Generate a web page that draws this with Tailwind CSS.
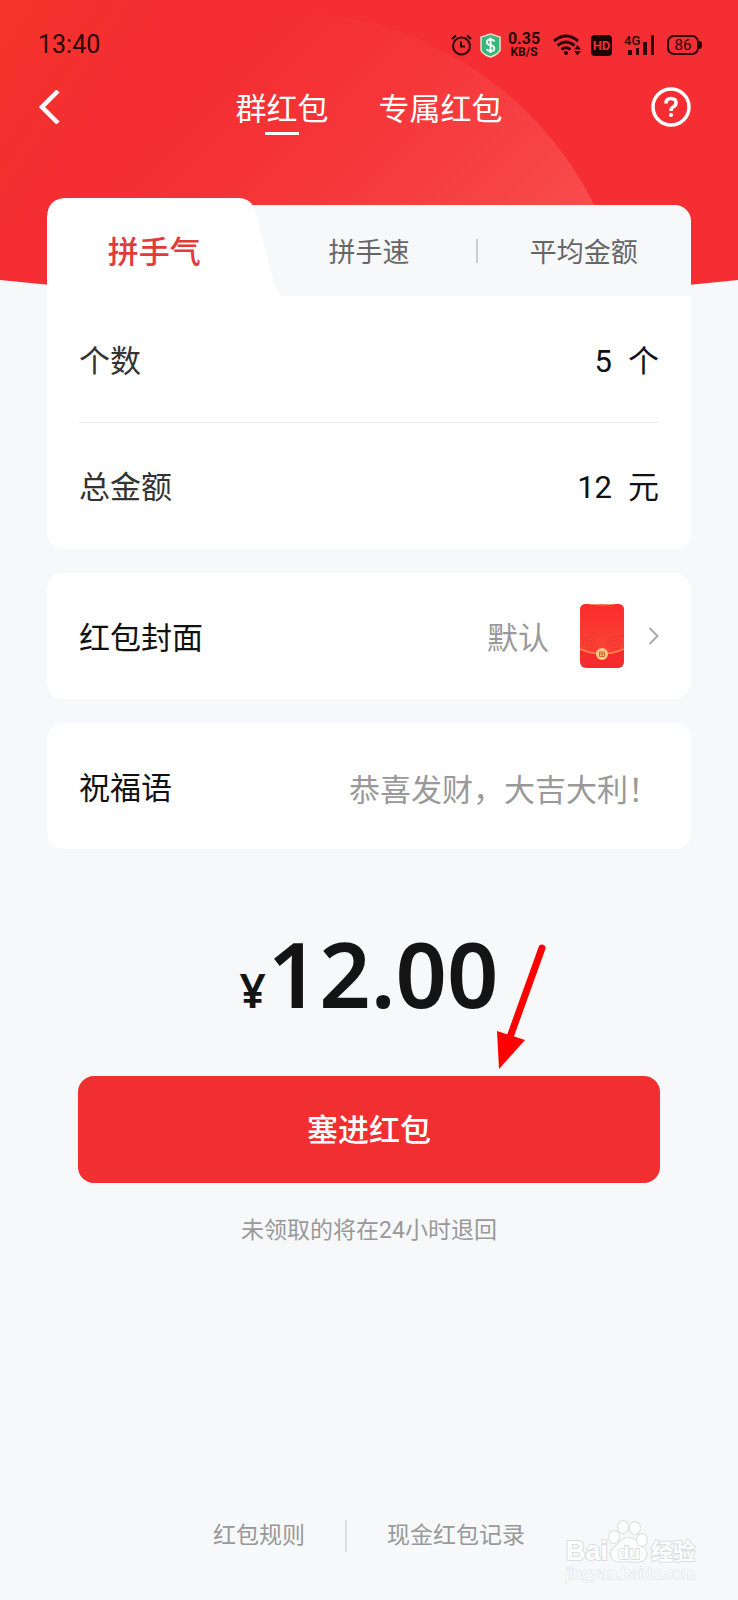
<!DOCTYPE html>
<html lang="zh-CN">
<head>
    <meta charset="UTF-8" />
    <meta name="viewport" content="width=device-width, initial-scale=1" />
    <title>群红包</title>
    <script src="https://cdn.jsdelivr.net/npm/@tailwindcss/browser@4"></script>
</head>
<body class="bg-[#f7f8fa] text-[#111] font-[Roboto,'Noto_Sans_CJK_SC',sans-serif]">
<div class="relative min-h-screen flex flex-col">
    <!-- Red backdrop -->
    <svg class="absolute inset-x-0 top-0 w-full h-[320px]" viewBox="0 0 738 320" preserveAspectRatio="none" aria-hidden="true">
        <defs>
            <linearGradient id="base" gradientUnits="userSpaceOnUse" x1="0" y1="0" x2="120" y2="80">
                <stop offset="0" stop-color="#f4342a" />
                <stop offset="1" stop-color="#f42e32" />
            </linearGradient>
            <linearGradient id="glow" gradientUnits="userSpaceOnUse" x1="250" y1="40" x2="500" y2="290">
                <stop offset="0" stop-color="#fb6363" stop-opacity="0" />
                <stop offset="0.4" stop-color="#fb6363" stop-opacity="0.15" />
                <stop offset="1" stop-color="#fb6363" stop-opacity="0.55" />
            </linearGradient>
            <clipPath id="arc"><path d="M0 0H738V280Q369 320 0 280Z" /></clipPath>
        </defs>
        <g clip-path="url(#arc)">
            <rect width="738" height="320" fill="url(#base)" />
            <circle cx="281" cy="361" r="350" fill="url(#glow)" />
        </g>
    </svg>

    <!-- Status bar -->
    <div class="relative h-[90px] pl-[38px] pr-9 flex items-center justify-between text-[#2a0606]">
        <span class="text-[25px] leading-8">13:40</span>
        <div class="flex items-center">
            <svg class="w-[21px] h-[22px] mr-2" viewBox="0 0 21 22" fill="none" stroke="currentColor" stroke-width="2">
                <circle cx="10.500" cy="12" r="8.500" />
                <path d="M10 7.500V12.500H14M1 5L5 1.500M20 5L16 1.500" />
            </svg>
            <svg class="w-[21px] h-[25px] mr-[6px]" viewBox="0 0 21 25">
                <path d="M10.500 1L20 4V17Q19 21 10.500 24Q2 21 1 17V4Z" fill="#36b878" stroke="#fbd9d0" stroke-width="1.500" />
                <path d="M14.500 8.500Q13.500 6.500 10.500 6.500Q6.800 6.500 6.800 9.300Q6.800 11.700 10.500 12.200Q14.300 12.800 14.300 15.400Q14.300 18 10.500 18Q7.500 18 6.500 16M10.500 4.500V20" fill="none" stroke="#fff" stroke-width="1.800" />
            </svg>
            <div class="w-[34px] mr-3 flex flex-col items-center font-bold">
                <span class="text-[16px] leading-[14px]">0.35</span>
                <span class="text-[12px] leading-[12px]">KB/S</span>
            </div>
            <svg class="w-[28px] h-[22px] mr-[10px]" viewBox="0 0 28 22" fill="none" stroke="currentColor" stroke-width="3">
                <path d="M1 7Q13 -3 25 7M4.500 11.500Q13 4.500 21.500 11.500M8.500 15.500Q13 12 17.500 15.500" />
                <circle cx="13" cy="19" r="2" fill="currentColor" stroke="none" />
                <path d="M21 15.500L24.500 11L28 15.500ZM21 17L24.500 21.500L28 17Z" fill="currentColor" stroke="none" />
            </svg>
            <span class="w-[21px] h-[21px] mr-3 rounded bg-[#1c0404] text-[#f42e32] text-[13px] leading-[21px] text-center font-bold">HD</span>
            <svg class="w-[31px] h-[22px] mr-3" viewBox="0 0 31 22" fill="currentColor">
                <text x="0" y="11" font-size="13" font-weight="500">4G</text>
                <path d="M4 16h4v5h-4zM12 14h3v7h-3zM19 8h4v13h-4zM27 1h3v20h-3z" />
            </svg>
            <span class="relative w-[32px] h-[20px] rounded-[7px] border-2 border-current text-[15px] leading-4 text-center">86</span>
            <span class="w-[3px] h-2 rounded-r bg-[#2a0606]"></span>
        </div>
    </div>

    <!-- Navigation -->
    <header class="relative h-[34px] grid grid-cols-[1fr_auto_1fr] items-center text-white">
        <button type="button" aria-label="返回" class="justify-self-start ml-[39px]">
            <svg class="w-[22px] h-[34px]" viewBox="0 0 22 34" fill="none" stroke="currentColor" stroke-width="4.500">
                <path d="M19 1L3 17L19 33" />
            </svg>
        </button>
        <nav class="flex gap-[50px] pt-[3px] -mb-[3px] text-[31px] leading-[34px]">
            <a href="#group" class="relative">群红包
                <span class="absolute left-1/2 -ml-[17px] -bottom-2 w-[34px] h-[3px] bg-white"></span>
            </a>
            <a href="#exclusive">专属红包</a>
        </nav>
        <button type="button" aria-label="帮助" class="justify-self-end mr-[47px] -my-1">
            <svg class="w-10 h-10" viewBox="0 0 40 40" fill="none" stroke="currentColor" stroke-width="3.500">
                <circle cx="20" cy="20" r="18" />
                <path d="M15 16.500Q15 11.500 20 11.500Q25 11.500 25 16Q25 18.500 22 20Q20 21 20 24" />
                <circle cx="20" cy="28" r="2" fill="currentColor" stroke="none" />
            </svg>
        </button>
    </header>

    <main class="relative mt-[74px] px-[47px] flex flex-col gap-6">
        <!-- Type, count and total -->
        <section>
            <div class="relative h-[98px] grid grid-cols-3 items-center text-[27px] text-[#666]">
                <div class="absolute inset-x-0 top-[7px] bottom-0 rounded-t-2xl bg-[#f7f8fa]"></div>
                <svg class="absolute left-0 top-0 w-[240px] h-[98px]" viewBox="0 0 240 98" fill="#fff" aria-hidden="true">
                    <path d="M0 98V20Q0 0 20 0H191Q204 0 208 12L226 82Q230 98 240 98Z" />
                </svg>
                <button type="button" class="relative h-full pt-3 text-[31px] font-medium text-[#e03a3a]">拼手气</button>
                <button type="button" class="relative h-full pt-3">拼手速</button>
                <button type="button" class="relative h-full pt-3">平均金额</button>
                <span class="absolute left-2/3 bottom-[33px] w-[2px] h-6 bg-[#ccc]"></span>
            </div>
            <div class="rounded-b-2xl bg-white px-8 text-[31px]">
                <div class="h-[127px] pt-[6px] flex items-center gap-4 border-b border-[#ececec]">
                    <label for="count" class="text-[#333]">个数</label>
                    <input id="count" type="text" inputmode="numeric" value="5" class="flex-1 min-w-0 text-right outline-none" />
                    <span>个</span>
                </div>
                <div class="h-[126px] pt-1 flex items-center gap-4">
                    <label for="total" class="text-[#333]">总金额</label>
                    <input id="total" type="text" inputmode="decimal" value="12" class="flex-1 min-w-0 text-right outline-none" />
                    <span>元</span>
                </div>
            </div>
        </section>

        <!-- Cover -->
        <a href="#cover" class="h-[126px] px-8 flex items-center rounded-2xl bg-white text-[31px]">
            <span class="pt-[6px]">红包封面</span>
            <span class="ml-auto mr-[31px] pt-[6px] text-[#999]">默认</span>
            <svg class="w-[44px] h-[64px] mr-6" viewBox="0 0 44 64" aria-hidden="true">
                <defs>
                    <linearGradient id="cover-fill" x1="0" y1="0" x2="0" y2="1">
                        <stop offset="0" stop-color="#fd2a2c" />
                        <stop offset="0.75" stop-color="#f93f36" />
                    </linearGradient>
                </defs>
                <rect width="44" height="64" rx="6" fill="#f42c2e" />
                <path d="M0 6Q0 0 6 0H38Q44 0 44 6V45Q22 55 0 45Z" fill="url(#cover-fill)" />
                <path d="M9 0Q22 2 35 0" fill="none" stroke="#fba071" />
                <g fill="none" stroke="#d92a22" stroke-opacity="0.35">
                    <circle cx="9" cy="39" r="6" /><circle cx="9" cy="39" r="3" />
                    <circle cx="34" cy="39" r="6" /><circle cx="34" cy="39" r="3" />
                    <path d="M0 33Q4 31 7 35M44 33Q40 30 36 34" />
                </g>
                <path d="M0 45Q22 55 44 45" fill="none" stroke="#fb8a4e" stroke-width="1.500" />
                <circle cx="22" cy="50" r="6" fill="#fbc883" />
                <path d="M19.500 48H24.500V52.500H19.500ZM19.500 50H24.500M22 48V52.500" fill="none" stroke="#cf6a35" />
            </svg>
            <svg class="w-[11px] h-[18px]" viewBox="0 0 11 18" fill="none" stroke="#aaa" stroke-width="2" aria-hidden="true">
                <path d="M1.500 1L9.500 9L1.500 17" />
            </svg>
        </a>

        <!-- Greeting -->
        <div class="h-[126px] px-8 pt-[6px] flex items-center rounded-2xl bg-white text-[31px]">
            <label for="wish">祝福语</label>
            <input id="wish" type="text" placeholder="恭喜发财，大吉大利！" class="flex-1 min-w-0 pt-1 text-right outline-none placeholder:text-[#999]" />
        </div>
    </main>

    <!-- Amount and submit -->
    <section class="relative mt-[68px] px-[78px] flex flex-col items-center">
        <p class="flex items-baseline gap-[2px] font-semibold text-[#141414] font-['Noto_Sans',sans-serif] leading-[112px]">
            <span class="text-[46px]">¥</span>
            <span class="text-[90px]">12.00</span>
        </p>
        <svg class="absolute left-1/2 top-6 ml-[124px] w-[56px] h-[130px]" viewBox="0 0 56 130" aria-hidden="true">
            <path d="M49 7L17 96" stroke="#f00" stroke-width="7" stroke-linecap="round" />
            <path d="M4 90L32 99L6 128Z" fill="#f00" />
        </svg>
        <button type="button" class="mt-[30px] w-full h-[107px] pt-1 rounded-2xl bg-[#f22f30] text-[31px] font-medium text-white">塞进红包</button>
        <p class="mt-8 text-[23px] leading-8 text-[#999]">未领取的将在24小时退回</p>
    </section>

    <!-- Footer links -->
    <footer class="relative mt-auto pb-12 flex items-center justify-center text-[23px] leading-8 text-[#999]">
        <a href="#rules">红包规则</a>
        <span class="mx-10 w-[2px] h-8 bg-[#ddd]"></span>
        <a href="#records">现金红包记录</a>
    </footer>

    <!-- Watermark -->
    <svg class="absolute right-[36px] bottom-4 w-[138px] h-[72px]" viewBox="0 -4 138 72" fill="#fff" stroke="#dcdde0" stroke-width="2" paint-order="stroke" aria-hidden="true">
        <text x="2" y="44" font-size="27" font-weight="700" font-family="Liberation Sans">Bai</text>
        <path d="M64 22Q70 21 76 29Q86 36 81 43Q76 47 64 45Q52 47 48 42Q44 35 54 29Q58 22 64 22Z" />
        <ellipse cx="50" cy="21" rx="5" ry="6" />
        <ellipse cx="59" cy="11" rx="5" ry="6" />
        <ellipse cx="71" cy="12" rx="5" ry="6" />
        <ellipse cx="78" cy="24" rx="5" ry="6" />
        <text x="54" y="43" font-size="18" font-weight="700" font-family="Liberation Sans">du</text>
        <text x="87" y="43" font-size="22" font-weight="700" font-family="Noto Sans CJK SC">经验</text>
        <text x="2" y="63" font-size="16" font-family="Liberation Sans" stroke-width="1">jingyan.baidu.com</text>
    </svg>
</div>
</body>
</html>
